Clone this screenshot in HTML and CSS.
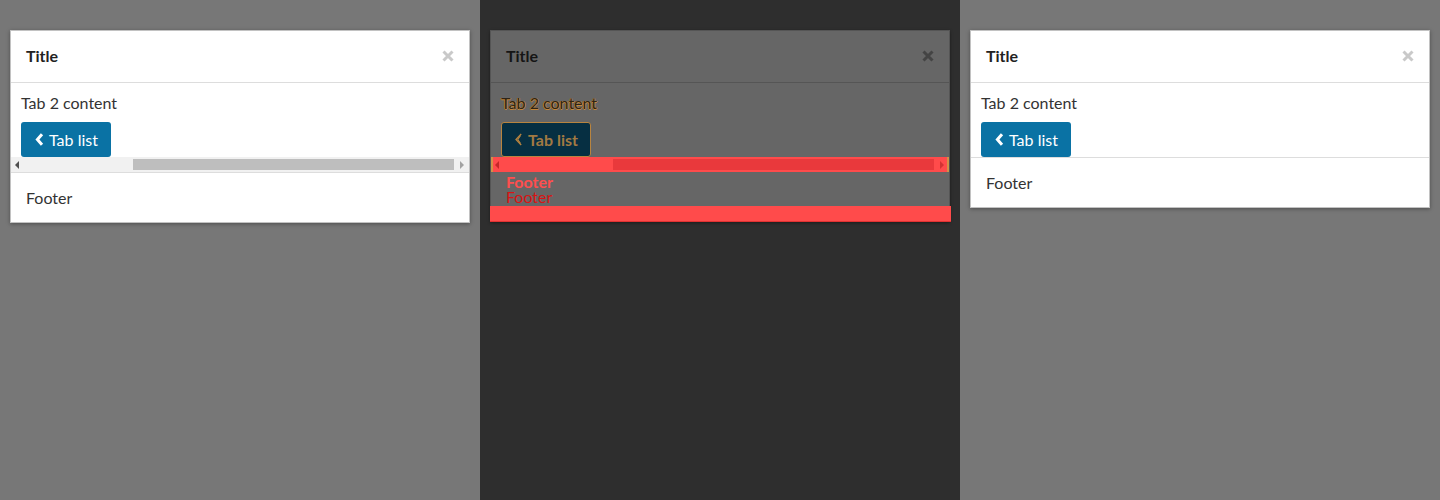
FILE: index.html
```html
<!DOCTYPE html>
<html>
<head>
<meta charset="utf-8">
<link rel="stylesheet" href="styles.css">
</head>
<body>
<div class="stage">
  <section class="pane pane-light">
    <div class="card">
      <div class="card-head">
        <span class="card-title">Title</span>
        <svg class="close" width="12" height="12" viewBox="0 0 12 12"><path d="M1.5 1.5 L10.5 10.5 M10.5 1.5 L1.5 10.5" stroke="#c9c9c9" stroke-width="3" fill="none"/></svg>
      </div>
      <div class="card-body">
        <p class="content">Tab 2 content</p>
        <button class="btn"><svg class="chev" width="9" height="13" viewBox="0 0 9 13"><path d="M7 1.2 L2.4 6.5 L7 11.8" stroke="#fff" stroke-width="3" fill="none"/></svg>Tab list</button>
      </div>
      <div class="hscroll">
        <span class="arrow arrow-l"></span>
        <span class="thumb"></span>
        <span class="arrow arrow-r"></span>
      </div>
      <div class="card-foot">Footer</div>
    </div>
  </section>

  <section class="pane pane-diff">
    <div class="card card-diff">
      <div class="card-head">
        <span class="card-title">Title</span>
        <svg class="close" width="12" height="12" viewBox="0 0 12 12"><path d="M1.5 1.5 L10.5 10.5 M10.5 1.5 L1.5 10.5" stroke="#444" stroke-width="3" fill="none"/></svg>
      </div>
      <div class="card-body">
        <p class="content">Tab 2 content</p>
        <button class="btn"><svg class="chev" width="9" height="13" viewBox="0 0 9 13"><path d="M7.2 1 L2 6.5 L7.2 12" stroke="#b8843f" stroke-width="1.3" fill="none"/><path d="M6.4 2.8 L3.8 6.5 L6.4 10.2" stroke="#b8843f" stroke-width="1.1" fill="none"/></svg>Tab list</button>
      </div>
      <div class="hscroll">
        <span class="arrow arrow-l"></span>
        <span class="thumb"></span>
        <span class="arrow arrow-r"></span>
      </div>
      <div class="foot-diff">
        <div class="foot-a">Footer</div>
        <div class="foot-b">Footer</div>
      </div>
      <div class="red-bar"></div>
    </div>
  </section>

  <section class="pane pane-light">
    <div class="card">
      <div class="card-head">
        <span class="card-title">Title</span>
        <svg class="close" width="12" height="12" viewBox="0 0 12 12"><path d="M1.5 1.5 L10.5 10.5 M10.5 1.5 L1.5 10.5" stroke="#c9c9c9" stroke-width="3" fill="none"/></svg>
      </div>
      <div class="card-body">
        <p class="content">Tab 2 content</p>
        <button class="btn"><svg class="chev" width="9" height="13" viewBox="0 0 9 13"><path d="M7 1.2 L2.4 6.5 L7 11.8" stroke="#fff" stroke-width="3" fill="none"/></svg>Tab list</button>
      </div>
      <div class="card-foot">Footer</div>
    </div>
  </section>
</div>
</body>
</html>
```

FILE: styles.css
```css
* { box-sizing: border-box; }
html, body { margin: 0; padding: 0; }
body {
  font-family: Lato, "Open Sans", "Liberation Sans", sans-serif;
  font-size: 16px;
  color: #333;
  width: 1440px;
  height: 500px;
  overflow: hidden;
}
.stage {
  display: grid;
  grid-template-columns: repeat(3, 480px);
  height: 500px;
}
.pane {
  display: flex;
  align-items: flex-start;
  padding: 30px 10px 0;
}
.pane-light { background: #777777; }
.pane-diff { background: #2e2e2e; }

.card {
  width: 460px;
  background: #fff;
  border: 1px solid #c2c2c2;
  box-shadow: 0 1px 4px rgba(0,0,0,0.35);
}
.card-head {
  height: 52px;
  display: flex;
  align-items: center;
  justify-content: space-between;
  padding: 0 15px 2px;
  border-bottom: 1px solid #dddddd;
}
.card-title {
  font-weight: 700;
  color: #222;
  font-size: 16px;
}
.close { display: block; margin-top: 1px; }
.card-body {
  padding: 10px 10px 0;
}
.content {
  margin: 0 0 9px;
  line-height: 20px;
  color: #333;
}
.btn {
  display: flex;
  align-items: center;
  gap: 5px;
  height: 35px;
  width: 90px;
  padding: 0 0 0 14px;
  border: 0;
  border-radius: 3px;
  background: #0a72a4;
  color: #fff;
  font-family: inherit;
  font-size: 16px;
}
.chev { display: block; }
.hscroll {
  height: 15px;
  background: #f1f1f1;
  display: flex;
  align-items: center;
  position: relative;
}
.arrow {
  width: 0; height: 0;
  border-top: 4px solid transparent;
  border-bottom: 4px solid transparent;
}
.arrow-l {
  border-right: 4px solid #505050;
  margin-left: 4px;
}
.arrow-r {
  border-left: 4px solid #a3a3a3;
  margin-left: auto;
  margin-right: 5px;
}
.thumb {
  position: absolute;
  left: 122px;
  width: 321px;
  top: 2px;
  height: 11px;
  background: #bebebe;
}
.card-foot {
  border-top: 1px solid #dddddd;
  padding: 15px;
  line-height: 19px;
  color: #333;
}

/* diff pane */
.card-diff {
  background: #666666;
  border-color: #555;
  box-shadow: 0 1px 3px rgba(0,0,0,0.4);
}
.card-diff .card-head { border-bottom-color: #555; }
.card-diff .card-title { color: #151515; }
.card-diff .content {
  color: #2e2416;
  text-shadow: 0.7px 0 #c4873a, -0.7px 0 #c4873a, 0 0.7px #c4873a;
}
.card-diff .btn {
  background: #062f42;
  border: 1px solid #b8843f;
  color: #a27a42;
  font-weight: 700;
  padding-left: 12px;
}
.card-diff .hscroll {
  background: #ff4b4b;
  border-left: 2px solid #d29147;
  border-right: 2px solid #d29147;
}
.card-diff .thumb {
  background: #e9393c;
  left: 120px;
}
.card-diff .arrow-l { border-right-color: #c42828; margin-left: 2px; }
.card-diff .arrow-r { border-left-color: #d23333; margin-right: 3px; }
.foot-diff {
  padding: 2px 15px 2px;
  line-height: 15px;
}
.foot-a { color: #ff4e4e; font-weight: 700; }
.foot-b { color: #d81414; }
.red-bar {
  height: 16px;
  margin: 0 0 -1px -1px;
  width: 461px;
  background: #ff4b4b;
  border-bottom: 1px solid #e23232;
}
```
